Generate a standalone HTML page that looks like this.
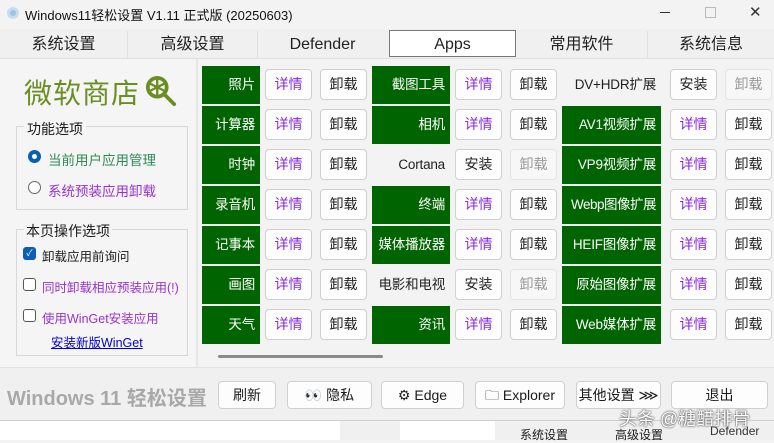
<!DOCTYPE html>
<html><head><meta charset="utf-8"><style>
*{margin:0;padding:0;box-sizing:border-box}
body{width:774px;height:440px;overflow:hidden;background:#f3f3f3;position:relative;font-family:"Liberation Sans","Noto Sans CJK SC",sans-serif;font-size:14px;color:#1a1a1a}
.a{position:absolute}
.tab{position:absolute;top:31px;height:27px;line-height:27px;text-align:center;font-size:16px;color:#222}
.g{position:absolute;height:38px;background:#006400;color:#fff;text-align:right;padding-right:5px;line-height:38px;font-size:13.5px;white-space:nowrap;letter-spacing:-0.2px}
.n{position:absolute;height:38px;color:#222;text-align:right;padding-right:5px;line-height:38px;font-size:13.5px;white-space:nowrap;letter-spacing:-0.2px}
.b{position:absolute;height:31px;width:47px;background:#fdfdfd;border:1px solid #d0d0d0;border-radius:4px;text-align:center;line-height:29px;font-size:14px;color:#222}
.p{color:#8a2be2}
.d{color:#9a9a9a;background:#f7f7f7;border-color:#e4e4e4}
.bb{position:absolute;top:381px;height:28px;background:#fdfdfd;border:1px solid #d0d0d0;border-radius:4px;text-align:center;line-height:26px;font-size:14px}
</style></head><body>
<div class="a" style="left:0;top:0;width:774px;height:28px;background:#f3f3f3"></div>
<div class="a" style="left:7px;top:7px;width:12px;height:12px;border-radius:50%;background:#9cc3e8;border:3px solid #c8dcf0"></div>
<div class="a" style="left:25px;top:5px;font-size:13px;color:#111">Windows11轻松设置 V1.11 正式版 (20250603)</div>
<div class="a" style="left:660px;top:12px;width:10px;height:1px;background:#333"></div>
<div class="a" style="left:705px;top:7px;width:11px;height:11px;border:1px solid #bbb"></div>
<div class="a" style="left:749px;top:3px;font-size:15px;color:#333">✕</div>
<div class="a" style="left:0;top:29px;width:774px;height:30px;background:#f0f0f0;border-bottom:1px solid #e0e0e0"></div>
<div class="tab" style="left:0;width:127px">系统设置</div>
<div class="tab" style="left:127px;width:130px;border-left:1px solid #e0e0e0">高级设置</div>
<div class="tab" style="left:257px;width:130px;border-left:1px solid #e0e0e0">Defender</div>
<div class="tab" style="left:389px;top:30px;width:127px;background:#fff;border:1px solid #777">Apps</div>
<div class="tab" style="left:516px;width:131px">常用软件</div>
<div class="tab" style="left:647px;width:127px;border-left:1px solid #e0e0e0">系统信息</div>
<div class="a" style="left:0;top:59px;width:198px;height:308px;background:#f5f5f5;border-right:2px solid #e6e6e6"></div>
<div class="a" style="left:24px;top:72px;font-size:28px;color:#6b8e23;letter-spacing:1px">微软商店</div>
<svg class="a" style="left:145px;top:75px" width="32" height="32" viewBox="0 0 34 34"><circle cx="13" cy="13" r="10" fill="none" stroke="#6b8e23" stroke-width="4"/><path d="M13 4v18M5 9l16 8M5 17l16-8" stroke="#6b8e23" stroke-width="2.5"/><path d="M20 20l11 11" stroke="#6b8e23" stroke-width="4" stroke-linecap="round"/></svg>
<div class="a" style="left:16px;top:126px;width:172px;height:84px;border:1px solid #d8d8d8"></div>
<div class="a" style="left:24px;top:119px;background:#f5f5f5;padding:0 3px;font-size:14px">功能选项</div>
<div class="a" style="left:28px;top:150px;width:13px;height:13px;border-radius:50%;background:#0a5fb4"><div class="a" style="left:4px;top:4px;width:5px;height:5px;border-radius:50%;background:#fff"></div></div>
<div class="a" style="left:48px;top:149px;color:#2e8b57;font-size:13.5px">当前用户应用管理</div>
<div class="a" style="left:28px;top:181px;width:13px;height:13px;border-radius:50%;border:1px solid #666;background:#fff"></div>
<div class="a" style="left:48px;top:180px;color:#9932cc;font-size:13.5px">系统预装应用卸载</div>
<div class="a" style="left:16px;top:229px;width:172px;height:127px;border:1px solid #d8d8d8"></div>
<div class="a" style="left:24px;top:221px;background:#f5f5f5;padding:0 2px;font-size:14px">本页操作选项</div>
<div class="a" style="left:23px;top:247px;width:13px;height:13px;border-radius:3px;background:#0a5fb4;color:#fff;font-size:9px;line-height:13px;text-align:center">✓</div>
<div class="a" style="left:42px;top:246px;font-size:12.5px">卸载应用前询问</div>
<div class="a" style="left:23px;top:278px;width:13px;height:13px;border-radius:3px;border:1px solid #555;background:#fff"></div>
<div class="a" style="left:42px;top:277px;font-size:12.5px;color:#9932cc">同时卸载相应预装应用(!)</div>
<div class="a" style="left:23px;top:309px;width:13px;height:13px;border-radius:3px;border:1px solid #555;background:#fff"></div>
<div class="a" style="left:42px;top:308px;font-size:12.5px;color:#9932cc">使用WinGet安装应用</div>
<div class="a" style="left:51px;top:332px;font-size:12.5px;color:#0000cd;text-decoration:underline">安装新版WinGet</div>

<div class="g" style="left:202px;top:66px;width:58px">照片</div><div class="b p" style="left:265px;top:69px">详情</div><div class="b" style="left:320px;top:69px">卸载</div>
<div class="g" style="left:202px;top:106px;width:58px">计算器</div><div class="b p" style="left:265px;top:109px">详情</div><div class="b" style="left:320px;top:109px">卸载</div>
<div class="g" style="left:202px;top:146px;width:58px">时钟</div><div class="b p" style="left:265px;top:149px">详情</div><div class="b" style="left:320px;top:149px">卸载</div>
<div class="g" style="left:202px;top:186px;width:58px">录音机</div><div class="b p" style="left:265px;top:189px">详情</div><div class="b" style="left:320px;top:189px">卸载</div>
<div class="g" style="left:202px;top:226px;width:58px">记事本</div><div class="b p" style="left:265px;top:229px">详情</div><div class="b" style="left:320px;top:229px">卸载</div>
<div class="g" style="left:202px;top:266px;width:58px">画图</div><div class="b p" style="left:265px;top:269px">详情</div><div class="b" style="left:320px;top:269px">卸载</div>
<div class="g" style="left:202px;top:306px;width:58px">天气</div><div class="b p" style="left:265px;top:309px">详情</div><div class="b" style="left:320px;top:309px">卸载</div>

<div class="g" style="left:372px;top:66px;width:78px">截图工具</div><div class="b p" style="left:455px;top:69px">详情</div><div class="b" style="left:510px;top:69px">卸载</div>
<div class="g" style="left:372px;top:106px;width:78px">相机</div><div class="b p" style="left:455px;top:109px">详情</div><div class="b" style="left:510px;top:109px">卸载</div>
<div class="n" style="left:372px;top:146px;width:78px">Cortana</div><div class="b" style="left:455px;top:149px">安装</div><div class="b d" style="left:510px;top:149px">卸载</div>
<div class="g" style="left:372px;top:186px;width:78px">终端</div><div class="b p" style="left:455px;top:189px">详情</div><div class="b" style="left:510px;top:189px">卸载</div>
<div class="g" style="left:372px;top:226px;width:78px">媒体播放器</div><div class="b p" style="left:455px;top:229px">详情</div><div class="b" style="left:510px;top:229px">卸载</div>
<div class="n" style="left:372px;top:266px;width:78px">电影和电视</div><div class="b" style="left:455px;top:269px">安装</div><div class="b d" style="left:510px;top:269px">卸载</div>
<div class="g" style="left:372px;top:306px;width:78px">资讯</div><div class="b p" style="left:455px;top:309px">详情</div><div class="b" style="left:510px;top:309px">卸载</div>

<div class="n" style="left:562px;top:66px;width:99px">DV+HDR扩展</div><div class="b" style="left:670px;top:69px">安装</div><div class="b d" style="left:725px;top:69px">卸载</div>
<div class="g" style="left:562px;top:106px;width:99px">AV1视频扩展</div><div class="b p" style="left:670px;top:109px">详情</div><div class="b" style="left:725px;top:109px">卸载</div>
<div class="g" style="left:562px;top:146px;width:99px">VP9视频扩展</div><div class="b p" style="left:670px;top:149px">详情</div><div class="b" style="left:725px;top:149px">卸载</div>
<div class="g" style="left:562px;top:186px;width:99px;letter-spacing:-0.5px">Webp图像扩展</div><div class="b p" style="left:670px;top:189px">详情</div><div class="b" style="left:725px;top:189px">卸载</div>
<div class="g" style="left:562px;top:226px;width:99px">HEIF图像扩展</div><div class="b p" style="left:670px;top:229px">详情</div><div class="b" style="left:725px;top:229px">卸载</div>
<div class="g" style="left:562px;top:266px;width:99px">原始图像扩展</div><div class="b p" style="left:670px;top:269px">详情</div><div class="b" style="left:725px;top:269px">卸载</div>
<div class="g" style="left:562px;top:306px;width:99px">Web媒体扩展</div><div class="b p" style="left:670px;top:309px">详情</div><div class="b" style="left:725px;top:309px">卸载</div>

<div class="a" style="left:218px;top:355px;width:165px;height:3px;background:#8a8a8a;border-radius:2px"></div>
<div class="a" style="left:0;top:367px;width:774px;height:54px;background:#f0f0f0;border-top:1px solid #e2e2e2;border-bottom:1px solid #cfcfcf"></div>
<div class="a" style="left:7px;top:382px;font-size:20px;font-weight:bold;color:#a8a8a8">Windows 11 轻松设置</div>
<div class="bb" style="left:218px;width:58px">刷新</div>
<div class="bb" style="left:287px;width:85px">👀 隐私</div>
<div class="bb" style="left:381px;width:83px">⚙ Edge</div>
<div class="bb" style="left:475px;width:90px">🗀 Explorer</div>
<div class="bb" style="left:576px;width:85px">其他设置 ⋙</div>
<div class="bb" style="left:671px;width:97px">退出</div>
<div class="a" style="left:0;top:421px;width:774px;height:19px;background:#fff"></div>
<div class="a" style="left:340px;top:421px;width:60px;height:19px;background:#f0f0f0"></div>
<div class="a" style="left:495px;top:421px;width:279px;height:19px;background:#f0f0f0"></div>
<div class="a" style="left:520px;top:426px;font-size:12px">系统设置</div>
<div class="a" style="left:615px;top:426px;font-size:12px">高级设置</div>
<div class="a" style="left:710px;top:424px;font-size:12px;color:#333">Defender</div>
<div class="a" style="left:619px;top:405px;font-size:18px;color:#fff;text-shadow:0 0 2px #555,0 0 1px #333">头条 @糖醋排骨</div>
</body></html>
